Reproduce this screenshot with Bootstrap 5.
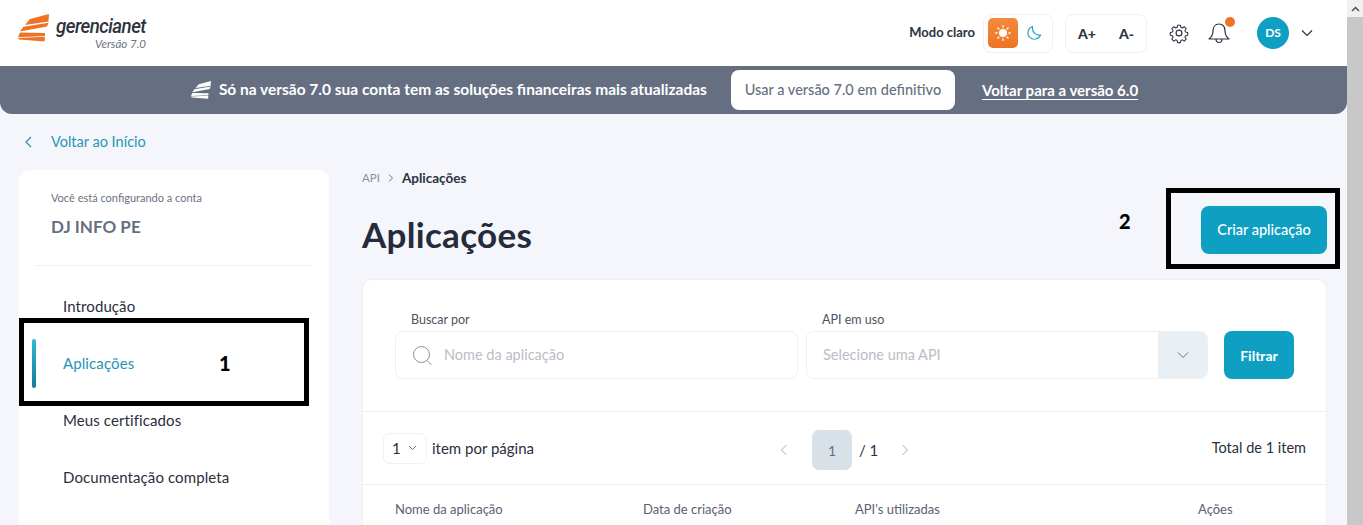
<!doctype html>
<html lang="pt-BR">
<head>
<meta charset="utf-8">
<title>Aplicações</title>
<link href="https://cdn.jsdelivr.net/npm/bootstrap@5.3.0/dist/css/bootstrap.min.css" rel="stylesheet">
<style>
html,body{height:525px;overflow:hidden}
body{font-family:Lato,"Noto Sans",sans-serif;background:#f4f6fb;color:#2a2f3d}
.app-shell{height:525px;position:relative;overflow:hidden}
.page-col{width:1347px;height:525px;overflow:hidden}
.fake-scroll{width:16px;height:525px;background:#c8c8c8;flex:none}
.fake-arrow{height:17px;background:#f1f1f1;color:#505050}
.top-head{height:66px;background:#fff;padding:0 34px 0 18px}
.logo-mark{margin-bottom:10px;flex:none}
.logo-text{width:90px;margin-left:7px;margin-top:-2px}
.logo-word{font-family:Roboto,sans-serif;font-style:italic;font-weight:500;font-size:21px;line-height:22px;letter-spacing:-.6px;color:#2d3340;transform:scaleX(.89);transform-origin:left;white-space:nowrap}
.logo-ver{font-size:11.500px;line-height:12px;font-style:italic;color:#6b7280;text-align:right;margin-top:1px}
.mode-lbl{font-size:13px;font-weight:700;color:#2d3340;margin-right:8px}
.tool-box{height:39px;background:#fff;border:1px solid #eef0f5;border-radius:8px}
.mode-box{width:70px;padding:0 4px}
.sun-btn{width:30px;height:30px;border-radius:5px;background:linear-gradient(#f58a3a,#ee7425)}
.font-box{width:82px;margin-left:12px;font-size:14px;font-weight:900;color:#2d3340;gap:23px}
.avatar{width:32px;height:32px;border-radius:50%;background:#0e9fc2;color:#fff;font-size:12px;font-weight:700}
.bell-wrap{position:relative;width:26px;height:26px}
.bell-dot{position:absolute;top:-3px;right:-3px;width:10px;height:10px;border-radius:50%;background:#ee7425}
.promo{height:48px;background:#666f82;border-radius:0 0 12px 12px;color:#fff;font-weight:700;padding-right:18px}
.promo-text{margin-left:8px;margin-right:24px;font-size:15.500px}
.promo-btn{width:224px;height:40px;background:#fff;border-radius:8px;color:#666f82;font-size:14.500px;font-weight:500;margin-right:27px}
.promo-link{color:#fff;font-size:15px;text-decoration:underline;text-underline-offset:3px}
.back-row{height:56px;padding-left:24px;color:#2496b3;font-size:14.500px;gap:18px}
.content-row{padding:0 20px 0 19px;gap:33px}
.side-card{width:310px;flex:none;background:#fff;border-radius:10px;height:400px;padding:22px 16px 0 16px}
.side-top{padding:0 16px;height:74px;border-bottom:1px solid #eef0f4}
.side-small{font-size:11px;color:#6b7280;line-height:12px}
.side-acct{font-size:17px;font-weight:700;color:#666f82;margin-top:13px;line-height:20px}
.side-nav{padding-top:12px}
.side-item{height:57px;padding-left:28px;font-size:15px;color:#2a2f3d;position:relative;letter-spacing:.1px}
.side-item.is-on{color:#2496b3}
.side-bar{position:absolute;left:-3px;top:4px;width:4px;height:49px;border-radius:2px;background:linear-gradient(#35b6d3,#0e7f99)}
.main-col{width:965px;flex:none}
.crumb{font-size:11.500px;color:#8a91a0;height:16px;line-height:16px}
.crumb b{color:#2d3340;font-weight:700;font-size:13.500px}
.title-row{height:93px}
.page-title{font-size:35px;font-weight:700;color:#252b3b;margin:0;line-height:40px;padding-top:28px;letter-spacing:.3px}
.create-btn{width:126px;height:48px;background:#0e9fc2;border:0;border-radius:8px;color:#fff;font-size:14.500px;font-weight:500;margin-top:20px}
.data-card{background:#fff;border:1px solid #eef0f4;border-radius:10px;height:300px}
.filter-row{height:132px;padding:32px 32px 0;border-bottom:1px solid #eef0f4;gap:8px}
.fld-lbl{font-size:12.500px;color:#4b5261;line-height:16px;height:19px;padding-left:16px}
.fld-box{height:48px;border:1px solid #eef0f4;border-radius:8px;font-size:14.500px;color:#b9bdc6;background:#fff;overflow:hidden}
.fld-a{width:403px}
.fld-b{width:402px}
.sel-arrow{width:49px;height:48px;background:#e8eff5;margin-left:auto}
.filter-btn{width:70px;height:48px;background:#0e9fc2;border:0;border-radius:8px;color:#fff;font-weight:700;font-size:14px;margin-left:8px}
.pager-row{height:73px;padding:0 20px;border-bottom:1px solid #eef0f4;font-size:15px;color:#2a2f3d;position:relative}
.per-box{width:44px;height:31px;border:1px solid #eef0f4;border-radius:7px;padding:0 8px;gap:7px;margin-right:5px}
.pager-mid{position:absolute;left:417px;top:18px;height:40px}
.page-cur{width:40px;height:40px;border-radius:7px;background:#d8e0e8;color:#666f82;margin:0 7px 0 24px;font-size:14px}
.total-lbl{font-size:14.500px}
.thead-row{height:48px;font-size:13px;color:#5a6170;position:relative}
.th-cell{position:absolute;top:16px;line-height:16px}
.mark-box{position:absolute;border:5px solid #000}
.mark-num{position:absolute;font-weight:900;font-size:20px;line-height:24px;color:#000}
</style>
</head>
<body>
<div class="app-shell d-flex">
  <div class="page-col">
    <header class="top-head d-flex align-items-center">
      <svg class="logo-mark" width="31" height="28" viewBox="0 0 31 28"><path fill="#ee7425" d="M31 0 30.500 7.500 7 11 12 5ZM30.500 8.700 29 12.500 2 17.600 5.300 12.700ZM2 18.500 27 19 27 22 0 23.300ZM0 24 27 22.800 26.500 27.500 1 25.500Z"/></svg>
      <div class="logo-text">
        <div class="logo-word">gerencianet</div>
        <div class="logo-ver">Versão 7.0</div>
      </div>
      <div class="ms-auto d-flex align-items-center">
        <span class="mode-lbl">Modo claro</span>
        <div class="tool-box mode-box d-flex align-items-center">
          <span class="sun-btn d-flex align-items-center justify-content-center">
            <svg width="16" height="16" viewBox="0 0 16 16" fill="none" stroke="#fff" stroke-width="1.400" stroke-linecap="round"><circle cx="8" cy="8" r="3.300" fill="#fff"/><path d="M8 .8v1.300M8 13.900v1.300M.8 8h1.300M13.900 8h1.300M2.900 2.900l.9.9M12.200 12.200l.9.9M2.900 13.100l.9-.9M12.200 3.800l.9-.9"/></svg>
          </span>
          <svg class="ms-2" width="16" height="16" viewBox="0 0 16 16" fill="none" stroke="#2ba5c2" stroke-width="1.100"><path d="M6.500 1.500a6.500 6.500 0 1 0 8 8.500c-4.500 1-8.800-3-8-8.500Z"/></svg>
        </div>
        <div class="tool-box font-box d-flex align-items-center justify-content-center"><span>A+</span><span>A-</span></div>
        <svg style="margin-left:21px" width="22" height="22" viewBox="0 0 24 24" fill="none" stroke="#2d3340" stroke-width="1.300" stroke-linejoin="round"><circle cx="12" cy="12" r="3.200"/><path d="M10.300 2.500h3.400l.5 2.600 1.900.8 2.200-1.500 2.400 2.400-1.500 2.200.8 1.900 2.600.5v3.400l-2.600.5-.8 1.900 1.500 2.200-2.400 2.400-2.200-1.500-1.900.8-.5 2.600h-3.400l-.5-2.600-1.900-.8-2.200 1.500-2.400-2.400 1.500-2.200-.8-1.900-2.600-.5v-3.400l2.600-.5.800-1.900-1.500-2.200 2.400-2.400 2.200 1.500 1.900-.8Z" transform="translate(1.200 1.200) scale(.9)"/></svg>
        <div class="bell-wrap d-flex align-items-center justify-content-center" style="margin-left:16px">
          <svg width="24" height="24" viewBox="0 0 24 24" fill="none" stroke="#2d3340" stroke-width="1.200" stroke-linejoin="round"><path d="M12 3c-4 0-6 3-6 7 0 4-1.500 6-4 8h20c-2.500-2-4-4-4-8 0-4-2-7-6-7ZM9 18c0 2.500 1.300 3.500 3 3.500s3-1 3-3.500"/></svg>
          <span class="bell-dot"></span>
        </div>
        <div class="avatar d-flex align-items-center justify-content-center" style="margin-left:25px">DS</div>
        <svg style="margin-left:12px" width="12" height="8" viewBox="0 0 12 8" fill="none" stroke="#2d3340" stroke-width="1.200"><path d="M1 1.500 6 6.500 11 1.500"/></svg>
      </div>
    </header>

    <div class="promo d-flex align-items-center justify-content-center">
      <svg width="20" height="18" viewBox="0 0 31 28"><path fill="#fff" d="M31 0 30.500 7.500 7 11 12 5ZM30.500 8.700 29 12.500 2 17.600 5.300 12.700ZM2 18.500 27 19 27 22 0 23.300ZM0 24 27 22.800 26.500 27.500 1 25.500Z"/></svg>
      <span class="promo-text">Só na versão 7.0 sua conta tem as soluções financeiras mais atualizadas</span>
      <span class="promo-btn d-flex align-items-center justify-content-center">Usar a versão 7.0 em definitivo</span>
      <a class="promo-link" href="#">Voltar para a versão 6.0</a>
    </div>

    <div class="back-row d-flex align-items-center">
      <svg width="9" height="12" viewBox="0 0 9 12" fill="none" stroke="#2496b3" stroke-width="1.200"><path d="M7 1 2 6 7 11"/></svg>
      <span>Voltar ao Início</span>
    </div>

    <div class="content-row d-flex">
      <aside class="side-card">
        <div class="side-top">
          <div class="side-small">Você está configurando a conta</div>
          <div class="side-acct">DJ INFO PE</div>
        </div>
        <nav class="side-nav">
          <div class="side-item d-flex align-items-center">Introdução</div>
          <div class="side-item is-on d-flex align-items-center"><span class="side-bar"></span>Aplicações</div>
          <div class="side-item d-flex align-items-center">Meus certificados</div>
          <div class="side-item d-flex align-items-center">Documentação completa</div>
        </nav>
      </aside>

      <main class="main-col">
        <div class="crumb d-flex align-items-center gap-2">API
          <svg width="6" height="8" viewBox="0 0 6 8" fill="none" stroke="#6b7280"><path d="M1 .5 4.500 4 1 7.500"/></svg>
          <b>Aplicações</b>
        </div>
        <div class="title-row d-flex justify-content-between align-items-start">
          <h1 class="page-title">Aplicações</h1>
          <button class="create-btn" type="button">Criar aplicação</button>
        </div>
        <section class="data-card">
          <div class="filter-row d-flex">
            <div class="fld-a">
              <div class="fld-lbl">Buscar por</div>
              <div class="fld-box d-flex align-items-center ps-3">
                <svg width="21" height="21" viewBox="0 0 21 21" fill="none" stroke="#8a91a0" stroke-width="1"><circle cx="9.500" cy="9.500" r="8"/><path d="M15 15.500l4.500 4.500"/></svg>
                <span style="margin-left:11px">Nome da aplicação</span>
              </div>
            </div>
            <div class="fld-b">
              <div class="fld-lbl">API em uso</div>
              <div class="fld-box d-flex align-items-center ps-3">
                <span>Selecione uma API</span>
                <span class="sel-arrow d-flex align-items-center justify-content-center"><svg width="12" height="8" viewBox="0 0 12 8" fill="none" stroke="#6b7280"><path d="M1 1.500 6 6.500 11 1.500"/></svg></span>
              </div>
            </div>
            <div class="d-flex align-items-start" style="padding-top:19px"><button class="filter-btn" type="button">Filtrar</button></div>
          </div>
          <div class="pager-row d-flex align-items-center">
            <div class="per-box d-flex align-items-center"><span>1</span><svg width="9" height="6" viewBox="0 0 9 6" fill="none" stroke="#6b7280"><path d="M1 1 4.500 4.500 8 1"/></svg></div>
            <span>item por página</span>
            <div class="pager-mid d-flex align-items-center">
              <svg width="8" height="12" viewBox="0 0 8 12" fill="none" stroke="#a8adb8"><path d="M6.500 1 1.500 6 6.500 11"/></svg>
              <span class="page-cur d-flex align-items-center justify-content-center">1</span>
              <span>/ 1</span>
              <svg style="margin-left:23px" width="8" height="12" viewBox="0 0 8 12" fill="none" stroke="#a8adb8"><path d="M1.500 1 6.500 6 1.500 11"/></svg>
            </div>
            <span class="ms-auto total-lbl">Total de 1 item</span>
          </div>
          <div class="thead-row">
            <span class="th-cell" style="left:32px">Nome da aplicação</span>
            <span class="th-cell" style="left:280px">Data de criação</span>
            <span class="th-cell" style="left:492px">API's utilizadas</span>
            <span class="th-cell" style="left:835px">Ações</span>
          </div>
        </section>
      </main>
    </div>
  </div>
  <div class="fake-scroll">
    <div class="fake-arrow d-flex align-items-center justify-content-center"><svg width="9" height="6" viewBox="0 0 9 6" fill="none" stroke="#505050" stroke-width="1.500"><path d="M1 5 4.500 1.500 8 5"/></svg></div>
  </div>

  <div class="mark-box" style="left:19px;top:318px;width:290px;height:88px"></div>
  <span class="mark-num" style="left:219px;top:351px">1</span>
  <div class="mark-box" style="left:1166px;top:188px;width:174px;height:81px"></div>
  <span class="mark-num" style="left:1119px;top:209px">2</span>
</div>
<script src="https://cdn.jsdelivr.net/npm/bootstrap@5.3.0/dist/js/bootstrap.bundle.min.js"></script>
</body>
</html>
